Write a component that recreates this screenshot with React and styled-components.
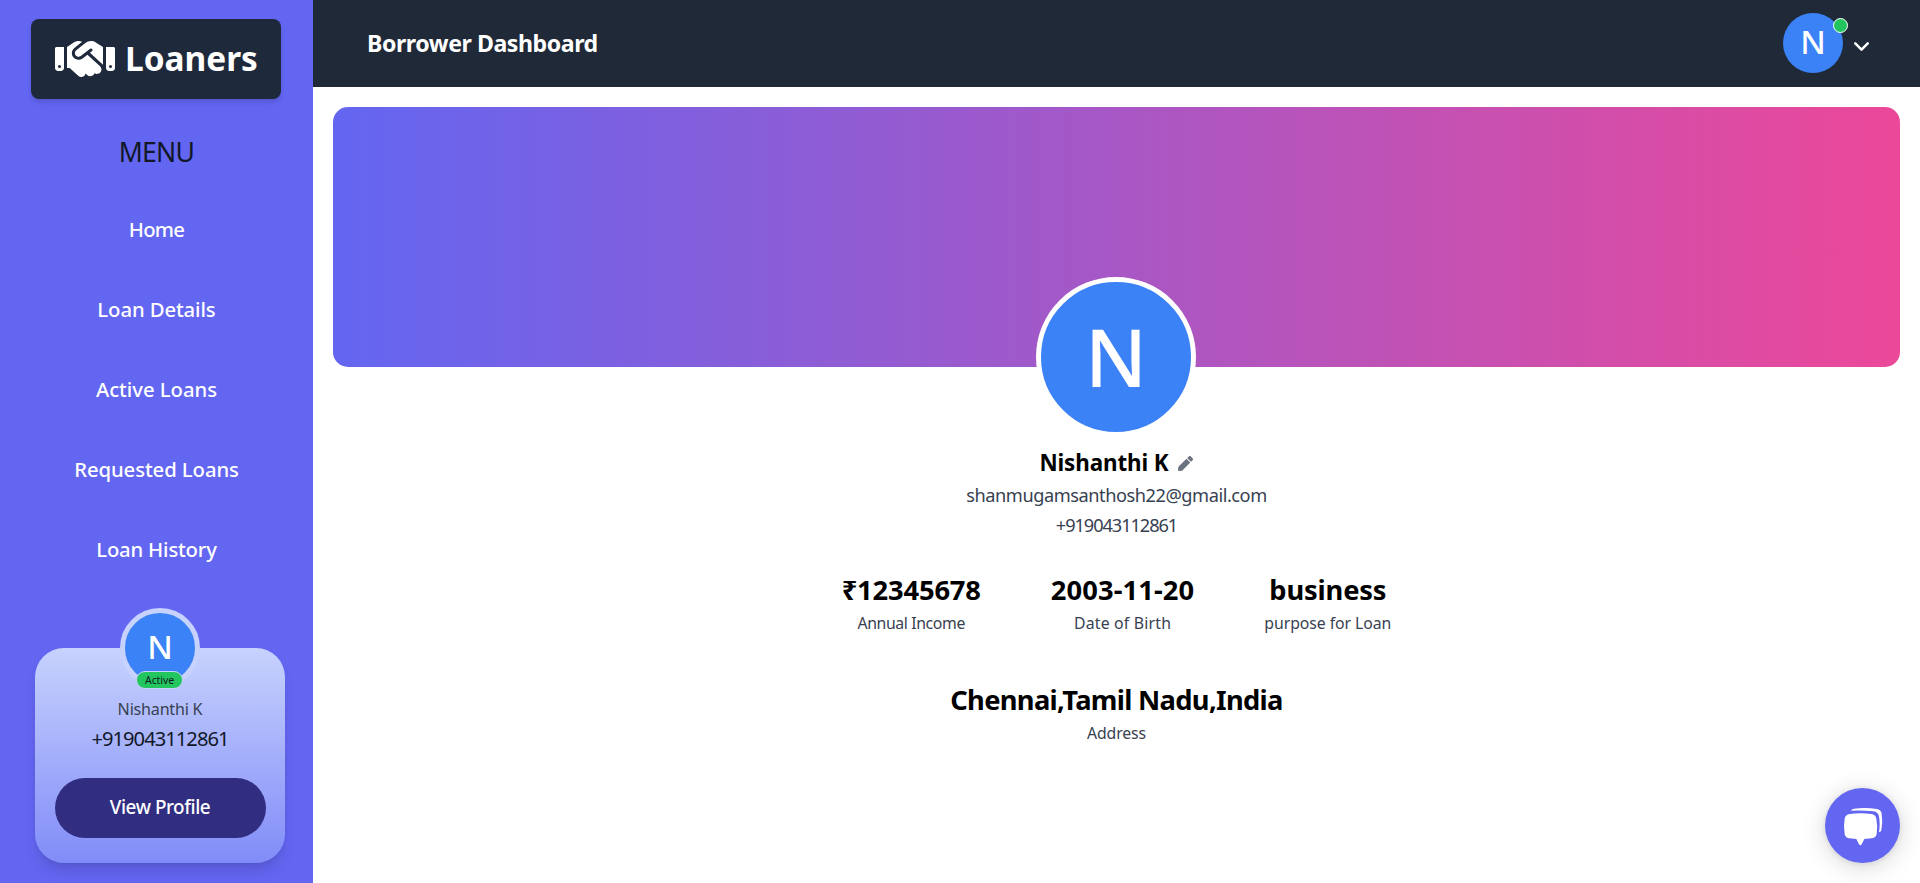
import React from 'react';
import styled, { createGlobalStyle } from 'styled-components';
import { FaPen } from 'react-icons/fa';
import { FaHandshake } from 'react-icons/fa6';
import { ChevronDown } from 'lucide-react';

const GlobalStyle = createGlobalStyle`
  *, *::before, *::after { box-sizing: border-box; }
  body { margin: 0; background: #fff; overflow: hidden; }
`;

const Page = styled.div`
  display: flex;
  width: 100%;
  height: 883px;
  font-family: 'Noto Sans', 'Open Sans', sans-serif;
  color: #000;
`;

const Text = styled.div`
  font-size: ${(p) => p.$size}px;
  font-weight: ${(p) => p.$weight || 400};
  line-height: ${(p) => p.$line}px;
  letter-spacing: ${(p) => p.$track || 0}px;
  color: ${(p) => p.$color || 'inherit'};
  white-space: nowrap;
  text-align: center;
`;

const Sidebar = styled.aside`
  width: 313px;
  flex-shrink: 0;
  display: flex;
  flex-direction: column;
  align-items: center;
  background: #6366f1;
`;

const Logo = styled.div`
  width: 250px;
  height: 80px;
  margin: 19px 1px 0 0;
  display: flex;
  align-items: center;
  padding-left: 24px;
  gap: 10px;
  border-radius: 8px;
  background: #1e293b;
  color: #fff;
  box-shadow: 0 4px 6px -1px rgba(0, 0, 0, 0.12), 0 2px 4px -2px rgba(0, 0, 0, 0.1);
`;

const Wordmark = styled(Text)`
  margin-bottom: 3px;
`;

const MenuTitle = styled(Text)`
  margin-top: 33px;
`;

const Nav = styled.nav`
  display: flex;
  flex-direction: column;
  margin-top: 17px;
`;

const NavLink = styled(Text)`
  height: 80px;
`;

const ProfileCard = styled.section`
  width: 250px;
  height: 215px;
  margin: 59px 0 0 7px;
  display: flex;
  flex-direction: column;
  align-items: center;
  border-radius: 29px;
  background: linear-gradient(to bottom, #c7d2fe, #818cf8);
  box-shadow: 0 10px 15px -3px rgba(0, 0, 0, 0.12), 0 4px 6px -4px rgba(0, 0, 0, 0.12);
`;

const Avatar = styled.div`
  position: relative;
  flex-shrink: 0;
  width: ${(p) => p.$size}px;
  height: ${(p) => p.$size}px;
  display: flex;
  align-items: center;
  justify-content: center;
  border: ${(p) => p.$border || '0'};
  border-radius: 50%;
  background: #3b82f6;
  color: #fff;
`;

const Initial = styled(Text)`
  margin-bottom: 3px;
`;

const CardAvatar = styled(Avatar)`
  margin-top: -40px;
`;

const HeaderAvatar = styled(Avatar)`
  margin-bottom: 1px;
`;

const ActiveBadge = styled.span`
  position: absolute;
  left: 11px;
  bottom: -6px;
  width: 47px;
  height: 18px;
  display: flex;
  align-items: center;
  justify-content: center;
  border: 1px solid #c7d2fe;
  border-radius: 9px;
  background: #22c55e;
`;

const ProfileButton = styled.button`
  width: 211px;
  height: 60px;
  margin-top: 31px;
  padding: 0 0 3px;
  border: 0;
  border-radius: 30px;
  background: #312e81;
  color: #fff;
  font-family: inherit;
`;

const Main = styled.main`
  flex: 1;
  display: flex;
  flex-direction: column;
  align-items: center;
`;

const Header = styled.header`
  align-self: stretch;
  height: 87px;
  display: flex;
  align-items: center;
  padding: 0 46px 0 54px;
  background: #1f2937;
  color: #fff;
`;

const Spacer = styled.div`
  flex: 1;
`;

const HeaderTitle = styled(Text)`
  margin-bottom: 2px;
`;

const OnlineDot = styled.span`
  position: absolute;
  left: 50px;
  top: 5px;
  width: 15px;
  height: 15px;
  border: 1px solid #fff;
  border-radius: 50%;
  background: #22c55e;
`;

const Arrow = styled(ChevronDown)`
  margin: 6px 0 0 6px;
`;

const Banner = styled.div`
  width: calc(100% - 40px);
  height: 260px;
  margin-top: 20px;
  border-radius: 15px;
  background: linear-gradient(to right, #6366f1, #ec4899);
`;

const HeroAvatar = styled(Avatar)`
  margin: -90px 1px 0 0;
`;

const NameRow = styled.div`
  display: flex;
  align-items: center;
  gap: 9px;
  margin: 8px 1px 0 0;
`;

const Pencil = styled(FaPen)`
  margin-top: 2px;
  color: #6b7280;
`;

const Stats = styled.div`
  display: flex;
  justify-content: center;
  gap: 70px;
  margin-top: ${(p) => p.$top}px;
`;

const ChatButton = styled.button`
  position: fixed;
  right: 20px;
  bottom: 20px;
  width: 75px;
  height: 75px;
  padding: 0 0 0 5px;
  display: flex;
  align-items: center;
  justify-content: center;
  border: 0;
  border-radius: 50%;
  background: #6366f1;
  box-shadow: 0 1px 6px rgba(0, 0, 0, 0.1), 0 4px 24px rgba(0, 0, 0, 0.16);
`;

const NAV = [
  ['Home', -0.77],
  ['Loan Details', -0.1],
  ['Active Loans', -0.03],
  ['Requested Loans', -0.08],
  ['Loan History', -0.19],
];

const STATS = [
  ['₹12345678', 'Annual Income', -0.16, -0.38],
  ['2003-11-20', 'Date of Birth', 0.12, 0.2],
  ['business', 'purpose for Loan', -0.15, -0.06],
];

function Stat({ value, label, valueTrack, labelTrack }) {
  return (
    <div>
      <Text $size={27.3} $weight={700} $line={40} $track={valueTrack}>{value}</Text>
      <Text $size={15.8} $line={26} $track={labelTrack} $color="#374151">{label}</Text>
    </div>
  );
}

function ChatIcon() {
  return (
    <svg width="60" height="60" viewBox="0 0 180 180" fill="#fff">
      <path d="M45 54 Q76 50 109 54 Q122 56 124 68 Q129 91 125 114 Q123 126 109 127 L88 129 L80 145 Q76 151 72 145 L64 129 L43 127 Q31 126 29 114 Q25 91 29 68 Q31 56 45 54Z" />
      <path d="M48 44 Q49 39 57 38 Q92 34 125 39 Q138 41 140 53 Q144 78 139 103 Q138 108 132 109 Q136 82 132 62 Q130 48 115 46 Q82 42 48 44Z" />
    </svg>
  );
}

export default function App() {
  return (
    <Page>
      <GlobalStyle />
      <Sidebar>
        <Logo>
          <FaHandshake size={60} />
          <Wordmark $size={33.4} $weight={700} $line={48}>Loaners</Wordmark>
        </Logo>
        <MenuTitle $size={26.6} $line={40} $track={-0.72} $color="#111827">MENU</MenuTitle>
        <Nav>
          {NAV.map(([label, track]) => (
            <NavLink key={label} $size={20.3} $weight={500} $line={80} $track={track} $color="#fff">{label}</NavLink>
          ))}
        </Nav>
        <ProfileCard>
          <CardAvatar $size={80} $border="5px solid #c7d2fe">
            <Initial $size={33} $weight={500} $line={67}>N</Initial>
            <ActiveBadge>
              <Text $size={10.5} $line={15} $track={-0.1} $color="#111827">Active</Text>
            </ActiveBadge>
          </CardAvatar>
          <Text $size={16.1} $line={42} $track={-0.21} $color="#374151">Nishanthi K</Text>
          <Text $size={20.1} $line={17} $track={-0.94} $color="#111827">+919043112861</Text>
          <ProfileButton>
            <Text $size={18.9} $weight={500} $line={30} $track={-0.45}>View Profile</Text>
          </ProfileButton>
        </ProfileCard>
      </Sidebar>
      <Main>
        <Header>
          <HeaderTitle $size={23.1} $weight={700} $line={34} $track={-0.43}>Borrower Dashboard</HeaderTitle>
          <Spacer />
          <HeaderAvatar $size={60}>
            <Initial $size={33} $weight={500} $line={57}>N</Initial>
            <OnlineDot />
          </HeaderAvatar>
          <Arrow size={25} strokeWidth={2.4} />
        </Header>
        <Banner />
        <HeroAvatar $size={160} $border="5px solid #fff">
          <Initial $size={80} $weight={500} $line={147}>N</Initial>
        </HeroAvatar>
        <NameRow>
          <Text $size={22.4} $weight={700} $line={35} $track={-0.1}>Nishanthi K</Text>
          <Pencil size={15} />
        </NameRow>
        <Text $size={18.2} $line={30} $track={-0.45} $color="#374151">shanmugamsanthosh22@gmail.com</Text>
        <Text $size={18.2} $line={30} $track={-1.07} $color="#374151">+919043112861</Text>
        <Stats $top={30}>
          {STATS.map(([value, label, vt, lt]) => (
            <Stat key={label} value={value} label={label} valueTrack={vt} labelTrack={lt} />
          ))}
        </Stats>
        <Stats $top={44}>
          <Stat value="Chennai,Tamil Nadu,India" label="Address" valueTrack={-0.68} labelTrack={-0.1} />
        </Stats>
      </Main>
      <ChatButton aria-label="Open chat">
        <ChatIcon />
      </ChatButton>
    </Page>
  );
}
